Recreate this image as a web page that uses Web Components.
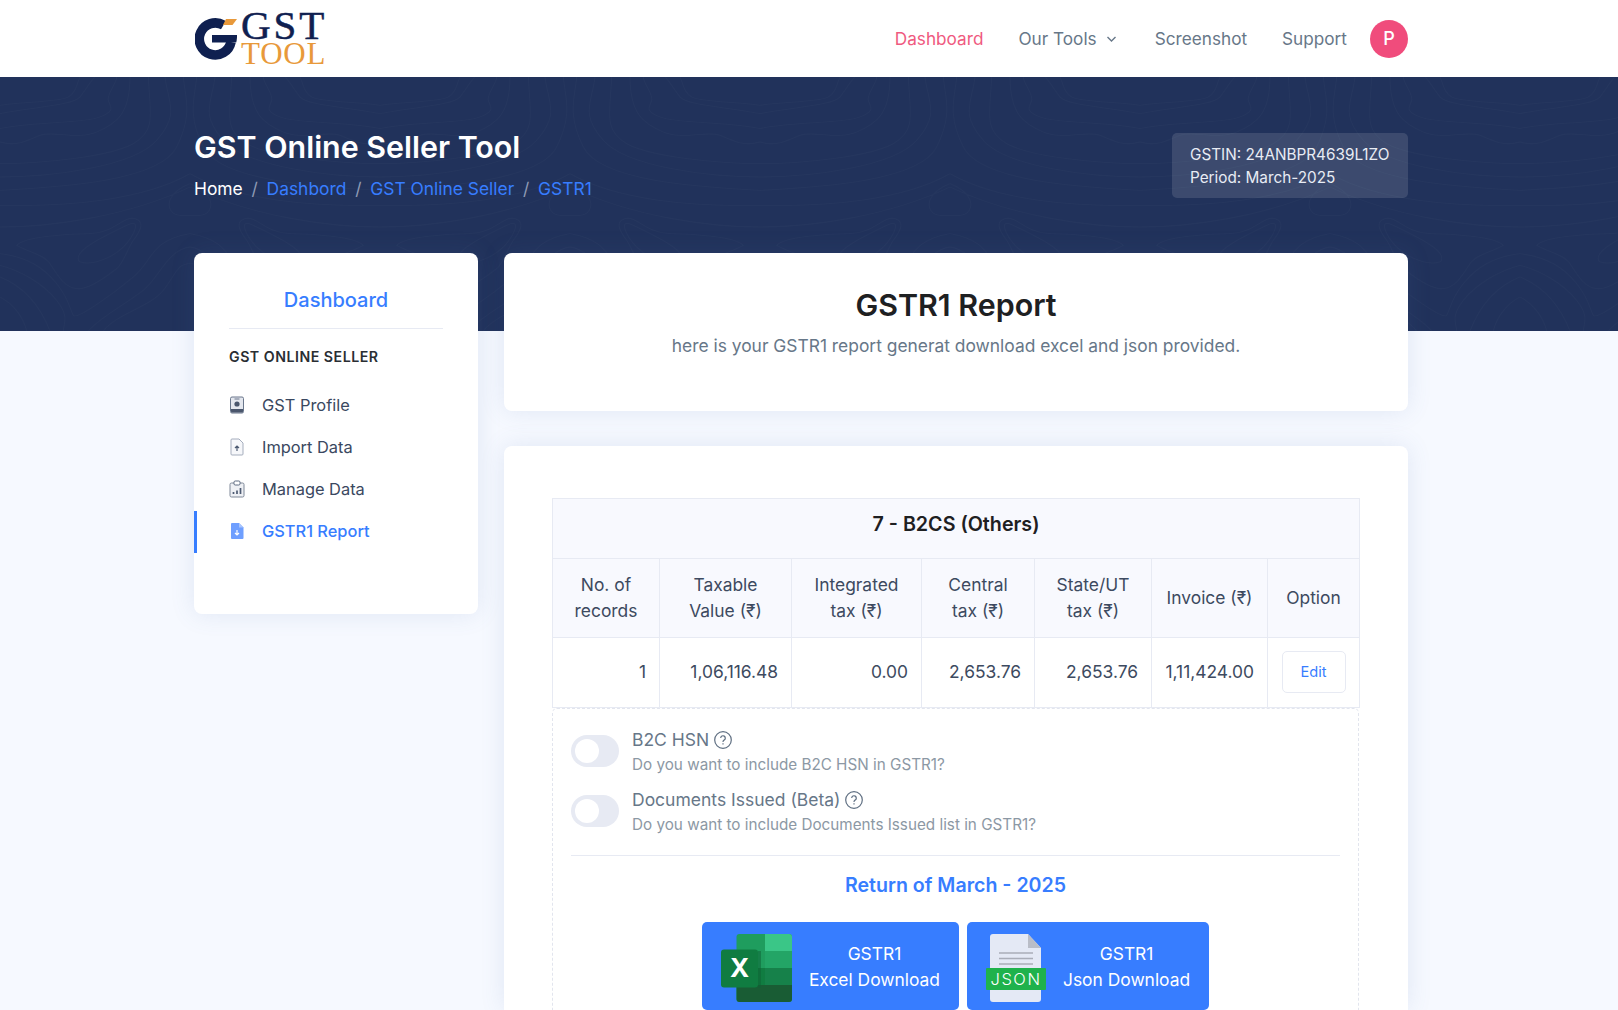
<!DOCTYPE html>
<html><head><meta charset="utf-8"><style>
html,body{margin:0;height:1010px;overflow:hidden;background:#f6f9ff;font-family:Inter,"Liberation Sans",sans-serif}
</style></head><body>
<gst-header></gst-header>
<gst-banner></gst-banner>
<div id="page" style="width:1214px;margin:-78px 0 0 194px;display:grid;grid-template-columns:284px 904px;gap:26px;position:relative;align-items:start">
<gst-sidebar></gst-sidebar>
<div style="display:flex;flex-direction:column;gap:35px">
<gst-intro></gst-intro>
<gst-report></gst-report>
</div></div>
<script>
const def=(n,h)=>customElements.define(n,class extends HTMLElement{constructor(){super();this.attachShadow({mode:'open'}).innerHTML=h}});
const tile=`M0 85C60 75 180 75 205 60S230 20 240 0M0 110C100 90 220 85 240 60S280 0 285 0M0 155C80 135 250 140 300 120S330 90 325 70 350 20 350 0M0 195C50 210 80 190 120 175S230 190 290 165 390 110 390 0M0 260C120 260 330 240 400 200S450 110 445 0M0 300C150 300 400 270 470 190S505 80 495 0M0 340C200 330 480 310 530 210S555 60 550 0M0 385C200 390 430 370 570 290M0 450C150 450 380 420 570 330M50 505C70 480 200 470 270 470S370 415 405 425 415 470 400 490 370 560 350 575 270 640 230 635 170 590 150 560 70 520 50 505ZM235 540C240 510 330 470 380 445S400 480 370 510 290 560 260 558 235 550 235 540ZM570 320C520 340 500 370 510 395S550 415 570 415M0 530C80 540 130 570 170 620S210 700 220 715 340 650 400 600 450 490 570 470M0 565C60 580 130 620 170 670S190 740 190 762M0 600C50 620 110 660 150 762M0 660C40 680 70 720 80 762M265 762C300 720 380 680 430 640S500 520 570 510M310 762C350 710 450 690 490 640S530 560 570 560`;
function contours(){let o='';for(let i=0;i<5;i++){o+=`<path transform="translate(${380*i} 0) scale(.3333)" d="${tile}"/><path transform="translate(${380*i+380} 0) scale(-.3333 .3333)" d="${tile}"/>`}return o}
def('gst-header',`<style>:host{display:block;background:#fff;height:77px}
.w{width:1214px;margin-left:194px;height:77px;display:flex;align-items:center;justify-content:space-between}
.logo{display:flex;align-items:flex-start;gap:4px;height:77px}
.g{margin:17px 0 0 1px;flex:none}
.tx{display:flex;flex-direction:column;margin-top:11px;font-family:"Liberation Serif",serif}
.gst{font-size:41px;line-height:28px;font-weight:400;color:#0f2050;letter-spacing:2.900px;-webkit-text-stroke:.5px #0f2050}
.tool{font-size:31px;line-height:29px;color:#e8993a;letter-spacing:.8px}
nav{display:flex;align-items:center;font-size:17.200px;color:#677788}
nav a{margin-right:35px;display:flex;align-items:center}nav a.a{color:#ef5a80}
nav a:nth-child(2){margin-right:37px}nav a:nth-child(3){margin-right:35px}nav a:nth-child(4){margin-right:23px}
.av{width:38px;height:38px;border-radius:50%;background:#f04c7c;color:#fff;display:flex;align-items:center;justify-content:center;font-weight:500;font-size:18px}
nav svg{margin-left:8px}</style>
<div class="w"><div class="logo">
<svg class="g" width="42" height="43" viewBox="0 0 42 43"><path d="M28.500 8.200 A16 16 0 1 0 36 25" fill="none" stroke="#0f2050" stroke-width="9.600"/><path d="M17 18h25c0 2 0 5-.8 7.500H17z" fill="#0f2050"/><path d="M31 2h11l-4.500 6H28z" fill="#e8993a"/></svg>
<div class="tx"><span class="gst">GST</span><span class="tool">TOOL</span></div></div>
<nav><a class="a">Dashboard</a><a>Our Tools<svg width="13" height="12" viewBox="0 0 13 12"><path d="M2.500 4 6.500 8l4-4" fill="none" stroke="#677788" stroke-width="1.400"/></svg></a><a>Screenshot</a><a>Support</a><span class="av">P</span></nav></div>`);
def('gst-banner',`<style>:host{display:block;height:254px;background:#21325b;position:relative;overflow:hidden}
svg.bg{position:absolute;inset:0;width:100%;height:100%}
.w{width:1214px;margin-left:194px;display:flex;justify-content:space-between;position:relative;padding-top:52px}
h1{margin:0;font-size:30.400px;font-weight:600;line-height:36px;color:#fff}
.bc{margin-top:11px;font-size:17.400px;line-height:26px;color:#8f9bb5;display:flex;gap:8.800px}
.bc b{font-weight:400;color:#fff}.bc a{color:#377dff}
.box{margin-top:4px;background:#ffffff1f;border-radius:5px;width:236px;height:65px;box-sizing:border-box;padding:11px 18px;font-size:15.300px;line-height:22.500px;color:#e8ecf4;white-space:nowrap}</style>
<svg class="bg" viewBox="0 0 1618 254" fill="none" stroke="#fff" stroke-opacity=".02" stroke-width="4">${contours()}</svg>
<div class="w"><div><h1>GST Online Seller Tool</h1><div class="bc"><b>Home</b><span>/</span><a>Dashbord</a><span>/</span><a>GST Online Seller</a><span>/</span><a>GSTR1</a></div></div>
<div class="box">GSTIN: 24ANBPR4639L1ZO<br>Period: March-2025</div></div>`);
const ic=d=>`<svg width="16" height="18" viewBox="0 0 16 18">${d}</svg>`;
def('gst-sidebar',`<style>:host{display:block;background:#fff;border-radius:8px;height:361px;box-shadow:0 0 24px #5273b022;box-sizing:border-box;padding:34px 35px 0}
h3{margin:0;text-align:center;font-size:20px;line-height:26px;font-weight:500;color:#377dff;padding-bottom:15px;border-bottom:1px solid #e7eaf3}
h4{margin:18px 0 18px;font-size:14.200px;line-height:20px;font-weight:600;letter-spacing:.5px;color:#2a2e33}
.i{display:flex;align-items:center;height:42px;box-sizing:border-box;padding-bottom:2px;font-size:16.400px;color:#3a4860;position:relative;gap:17px}
.a{color:#377dff;font-weight:500}.a::before{content:"";position:absolute;left:-35px;top:0;width:3px;height:42px;background:#377dff}
svg{flex:none}</style>
<h3>Dashboard</h3><h4>GST ONLINE SELLER</h4>
<div class="i">${ic('<rect x="1.500" y="1" width="13" height="16" rx="1.500" fill="#e4e7ee" stroke="#6a778c"/><rect x="5.500" y="2.500" width="5" height="1" fill="#6a778c"/><circle cx="8" cy="8" r="2.600" fill="#4a566c"/><path d="M2 13h12v2.500a1 1 0 0 1-1 1H3a1 1 0 0 1-1-1z" fill="#4a566c"/>')}GST Profile</div>
<div class="i">${ic('<path d="M3 1h7l4 4v11a1 1 0 0 1-1 1H3a1 1 0 0 1-1-1V2a1 1 0 0 1 1-1z" fill="#f6f7fa" stroke="#a5adbd"/><path d="M8 13V8M6 10l2-2 2 2" fill="none" stroke="#4d5b72" stroke-width="1.200"/>')}Import Data</div>
<div class="i">${ic('<rect x="1" y="3" width="14" height="14" rx="1.500" fill="#eef0f4" stroke="#7e8898"/><rect x="5" y="1" width="6" height="4" rx="1.200" fill="#fff" stroke="#5d6b82"/><path d="M4.500 14v-2M8 14v-3.500M11.500 14V8" stroke="#4d5b72" stroke-width="1.700"/>')}Manage Data</div>
<div class="i a">${ic('<path d="M3 1h7l4.500 4.500V16a1 1 0 0 1-1 1H3a1 1 0 0 1-1-1V2a1 1 0 0 1 1-1z" fill="#6f9fff"/><path d="M10 1l4.500 4.500H10z" fill="#a9c6ff"/><path d="M8 8v5M6 11l2 2 2-2" fill="none" stroke="#fff" stroke-width="1.200"/>')}GSTR1 Report</div>`);
def('gst-intro',`<style>:host{display:block;background:#fff;border-radius:8px;height:158px;box-shadow:0 0 24px #5273b022;text-align:center;padding-top:34px;box-sizing:border-box}
h2{margin:0;font-size:30.400px;line-height:36px;font-weight:600;color:#1e2022}p{margin:10px 0 0;font-size:17.400px;line-height:26px;color:#677788}</style>
<h2>GSTR1 Report</h2><p>here is your GSTR1 report generat download excel and json provided.</p>`);
def('gst-toggle',`<style>:host{display:flex;gap:13px;height:60px}
.t{width:48px;height:32px;border-radius:16px;background:#e7eaf3;margin-top:9px;position:relative;flex:none}.t::after{content:"";position:absolute;left:4px;top:4px;width:24px;height:24px;border-radius:50%;background:#fff}
.c{padding-top:1px}
.l{font-size:17.500px;line-height:26px;color:#677788;display:flex;align-items:center;gap:5px}.s{font-size:15.250px;line-height:24px;color:#8c98a4}
svg{flex:none}</style><span class="t"></span><div class="c"><div class="l"><slot name="l"></slot><svg width="18" height="18" viewBox="0 0 18 18" fill="none" stroke="#5f6f82" stroke-width="1.200"><circle cx="9" cy="9" r="8.300"/><path d="M6.700 7a2.300 2.300 0 1 1 3.400 2.100c-.8.500-1.100.900-1.100 1.800M9 12.300v1.300"/></svg></div><div class="s"><slot name="s"></slot></div></div>`);
def('gst-report',`<style>:host{display:block;background:#fff;border-radius:8px 8px 0 0;box-shadow:0 0 24px #5273b022;padding:52px 45px 0 48px;height:564px;box-sizing:border-box;overflow:hidden}
table{border-collapse:collapse;width:807px;table-layout:fixed;font-size:17.400px;color:#3d4a60}
td,th{border:1px solid #e7eaf3;font-weight:400;text-align:center;line-height:26px;padding:0 8px;box-sizing:border-box}
thead tr:first-child th{height:60px;background:#f8f9fe;font-size:19.700px;font-weight:600;color:#1e2022;padding-bottom:10px}
thead tr:nth-child(2) th{height:79px;background:#f8f9fe}
td{height:70px;text-align:right;padding:0 13px 1px}td.e{text-align:center;padding:0 0 1px}
.ed{display:inline-block;width:64px;height:42px;border:1px solid #e7eaf3;border-radius:5px;box-sizing:border-box;text-align:center;font-size:14.600px;color:#377dff;vertical-align:middle;line-height:41px}
.box{border:1px dashed #e2e5ee;padding:17px 18px 0;height:320px;border-radius:5px;box-sizing:border-box;width:807px}
hr{border:0;border-top:1px solid #e7eaf3;margin:9px 0 0}
h5{margin:16px 0 24px;text-align:center;font-size:19.600px;line-height:26px;font-weight:600;color:#377dff}
.bs{display:flex;gap:8px;justify-content:center}
.b{height:88px;background:#377dff;border-radius:5px;color:#fff;font-size:17.400px;line-height:26px;display:flex;align-items:flex-start;text-align:center;box-sizing:border-box;padding:19px 19px 0;gap:17px;white-space:nowrap}
.b svg{flex:none;margin-top:-7px}</style>
<table><colgroup><col style="width:107px"><col style="width:132px"><col style="width:130px"><col style="width:113px"><col style="width:117px"><col style="width:116px"><col style="width:92px"></colgroup>
<thead><tr><th colspan="7">7 - B2CS (Others)</th></tr>
<tr><th>No. of<br>records</th><th>Taxable<br>Value (₹)</th><th>Integrated<br>tax (₹)</th><th>Central<br>tax (₹)</th><th>State/UT<br>tax (₹)</th><th>Invoice (₹)</th><th>Option</th></tr></thead>
<tbody><tr><td>1</td><td>1,06,116.48</td><td>0.00</td><td>2,653.76</td><td>2,653.76</td><td>1,11,424.00</td><td class="e"><span class="ed">Edit</span></td></tr></tbody></table>
<div class="box">
<gst-toggle><span slot="l">B2C HSN</span><span slot="s">Do you want to include B2C HSN in GSTR1?</span></gst-toggle>
<gst-toggle><span slot="l">Documents Issued (Beta)</span><span slot="s">Do you want to include Documents Issued list in GSTR1?</span></gst-toggle>
<hr><h5>Return of March - 2025</h5>
<div class="bs"><div class="b"><svg width="71" height="68" viewBox="0 0 71 68"><rect x="15.500" y="0" width="55.500" height="68" rx="3" fill="#1f9d5e"/><path d="M44 0h24a3 3 0 0 1 3 3v14H44z" fill="#3ac687"/><rect x="44" y="17" width="27" height="17" fill="#23a566"/><rect x="44" y="34" width="27" height="17" fill="#16814a"/><path d="M15.500 51H71v14a3 3 0 0 1-3 3H18.500a3 3 0 0 1-3-3z" fill="#195c34"/><rect x="15.500" y="34" width="28.500" height="17" fill="#107c41"/><rect x="37" y="17" width="3" height="37" fill="#0d5f33" opacity=".5"/><rect x="0" y="15.500" width="37" height="38" rx="3" fill="#107c41"/><text x="18.500" y="43" text-anchor="middle" fill="#fff" font-family="Inter" font-weight="700" font-size="26">X</text></svg><div>GSTR1<br>Excel Download</div></div>
<div class="b"><svg width="60" height="68" viewBox="0 0 60 68"><path d="M7 0h35l13 14v51a3 3 0 0 1-3 3H7a3 3 0 0 1-3-3V3a3 3 0 0 1 3-3z" fill="#e4e9f5"/><path d="M42 0l13 14H42z" fill="#b9bdc7"/><path d="M13 19h34M13 24.500h34M13 30h34" stroke="#a9adb8" stroke-width="1.500"/><rect x="0" y="34" width="60" height="22" rx="1" fill="#1fb24c"/><text x="30" y="51" text-anchor="middle" fill="#fff" font-family="Inter" font-weight="300" letter-spacing="1.500" font-size="16.500">JSON</text></svg><div>GSTR1<br>Json Download</div></div></div>
</div>`);
</script></body></html>
